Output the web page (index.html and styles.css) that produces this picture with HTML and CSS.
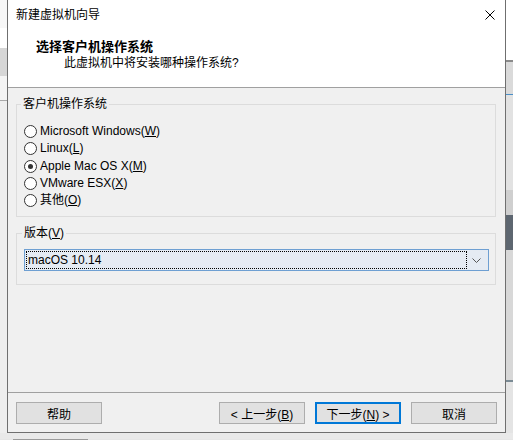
FILE: index.html
```html
<!DOCTYPE html>
<html lang="zh-CN">
<head>
  <meta charset="UTF-8" />
  <title>新建虚拟机向导</title>
  <link rel="stylesheet" href="styles.css">
</head>
<body>
  <div class="screen">
    <div class="edge edge-left"></div>
    <div class="dialog">
      <div class="titlebar">
        <span>新建虚拟机向导</span>
        <svg class="close" width="10" height="10" viewBox="0 0 10 10">
          <path d="M0.5 0.5 L9.5 9.5 M9.5 0.5 L0.5 9.5" stroke="#000" stroke-width="1" fill="none"/>
        </svg>
      </div>
      <div class="header">
        <div class="header-title">选择客户机操作系统</div>
        <div class="header-sub">此虚拟机中将安装哪种操作系统?</div>
      </div>
      <div class="content">
        <fieldset class="group group-os">
          <legend>客户机操作系统</legend>
          <div class="radio"><span class="dot"></span><span>Microsoft Windows(<u>W</u>)</span></div>
          <div class="radio"><span class="dot"></span><span>Linux(<u>L</u>)</span></div>
          <div class="radio checked"><span class="dot"></span><span>Apple Mac OS X(<u>M</u>)</span></div>
          <div class="radio"><span class="dot"></span><span>VMware ESX(<u>X</u>)</span></div>
          <div class="radio"><span class="dot"></span><span>其他(<u>O</u>)</span></div>
        </fieldset>
        <fieldset class="group group-version">
          <legend>版本(<u>V</u>)</legend>
          <div class="combo">
            <div class="combo-value">macOS 10.14</div>
            <svg class="combo-arrow" width="9" height="5" viewBox="0 0 9 5">
              <path d="M0.5 0.5 L4.5 4.5 L8.5 0.5" stroke="#555" stroke-width="1" fill="none"/>
            </svg>
          </div>
        </fieldset>
      </div>
      <div class="footer">
        <button type="button" class="btn">帮助</button>
        <div class="spacer"></div>
        <button type="button" class="btn">&lt; 上一步(<u>B</u>)</button>
        <button type="button" class="btn btn-default">下一步(<u>N</u>) &gt;</button>
        <button type="button" class="btn">取消</button>
      </div>
    </div>
    <div class="edge edge-right"></div>
  </div>
  <div class="below"></div>
</body>
</html>
```

FILE: styles.css
```css
* {
  margin: 0;
  padding: 0;
  box-sizing: border-box;
}
body {
  font-family: "Liberation Sans", "Noto Sans CJK SC", sans-serif;
  font-size: 12px;
  color: #000;
  background-color: #e9e9e9;
  width: 513px;
  height: 440px;
  overflow: hidden;
}
.screen {
  display: flex;
  height: 433px;
}
.edge {
  width: 7px;
  flex: none;
}
.edge-left {
  background: linear-gradient(to bottom,
    #f7f7f7 0 28px, #ffffff 28px 48px, #d6d6d6 48px 76px,
    #f4f4f4 76px 100px, #a8a8a8 100px 101px, #eeeeee 101px);
}
.edge-right {
  background: linear-gradient(to bottom,
    #ffffff 0 60px, #8a8a8a 60px 62px, #dadada 62px 94px,
    #4a8fc7 94px 95px, #e2e2e2 95px 190px, #cfcfcf 190px 215px,
    #5d6670 215px 250px, #d8d8d8 250px 380px, #7a8a94 380px 382px, #e4e4e4 382px);
}
.dialog {
  width: 499px;
  flex: none;
  display: flex;
  flex-direction: column;
  background-color: #f0f0f0;
  border: 1px solid #6f6f6f;
  border-top: none;
}
.titlebar {
  height: 31px;
  padding: 0 10px 0 8px;
  display: flex;
  align-items: center;
  justify-content: space-between;
  background-color: #fff;
}
.titlebar span {
  line-height: 16px;
  margin-top: -1px;
}
.close {
  margin-top: -1px;
}
.header {
  height: 57px;
  padding: 7px 0 0 28px;
  background-color: #fff;
  border-bottom: 1px solid #a0a0a0;
}
.header-title {
  font-size: 13px;
  font-weight: bold;
  line-height: 17px;
}
.header-sub {
  padding-left: 28px;
  line-height: 16px;
}
.content {
  flex: 1;
  padding: 0 9px 0 8px;
}
.group {
  border: 1px solid #dcdcdc;
  padding: 0 6px 0 7px;
}
.group legend {
  line-height: 16px;
  padding: 0 2px;
}
.group-os {
  margin-top: 8px;
  padding-top: 11px;
  padding-bottom: 7px;
}
.group-os legend {
  margin-left: -3px;
}
.group-version {
  margin-top: 8px;
  padding-top: 8px;
  padding-bottom: 13px;
}
.group-version legend {
  margin-left: -2px;
}
.radio {
  height: 17.25px;
  display: flex;
  align-items: center;
  gap: 3px;
  line-height: 17px;
}
.dot {
  width: 13px;
  height: 13px;
  border: 1px solid #333;
  border-radius: 50%;
  background-color: #fff;
  display: flex;
  align-items: center;
  justify-content: center;
}
.checked .dot::after {
  content: "";
  width: 5px;
  height: 5px;
  border-radius: 50%;
  background-color: #333;
}
.combo {
  height: 22px;
  display: flex;
  align-items: center;
  padding: 1px;
  background-color: #e5ebf3;
  border: 1px solid #6e9fd2;
}
.combo-value {
  flex: 1;
  height: 18px;
  line-height: 16px;
  padding-left: 1px;
  border: 1px dotted #000;
}
.combo-arrow {
  margin: 0 6px 0 5px;
}
.footer {
  display: flex;
  gap: 10px;
  padding: 9px 8px 8px 8px;
  border-top: 1px solid #a0a0a0;
}
.spacer {
  flex: 1;
}
.btn {
  width: 86px;
  height: 22px;
  font-family: inherit;
  font-size: 12px;
  color: #000;
  background-color: #e1e1e1;
  border: 1px solid #adadad;
}
.btn-default {
  border: 2px solid #0078d7;
}
.below {
  height: 7px;
  background: linear-gradient(to right, #e6e6e6 0 13px, #9a9a9a 13px 88px, #e6e6e6 88px);
  background-size: 100% 1px;
  background-repeat: no-repeat;
  background-position: 0 6px;
}
```
